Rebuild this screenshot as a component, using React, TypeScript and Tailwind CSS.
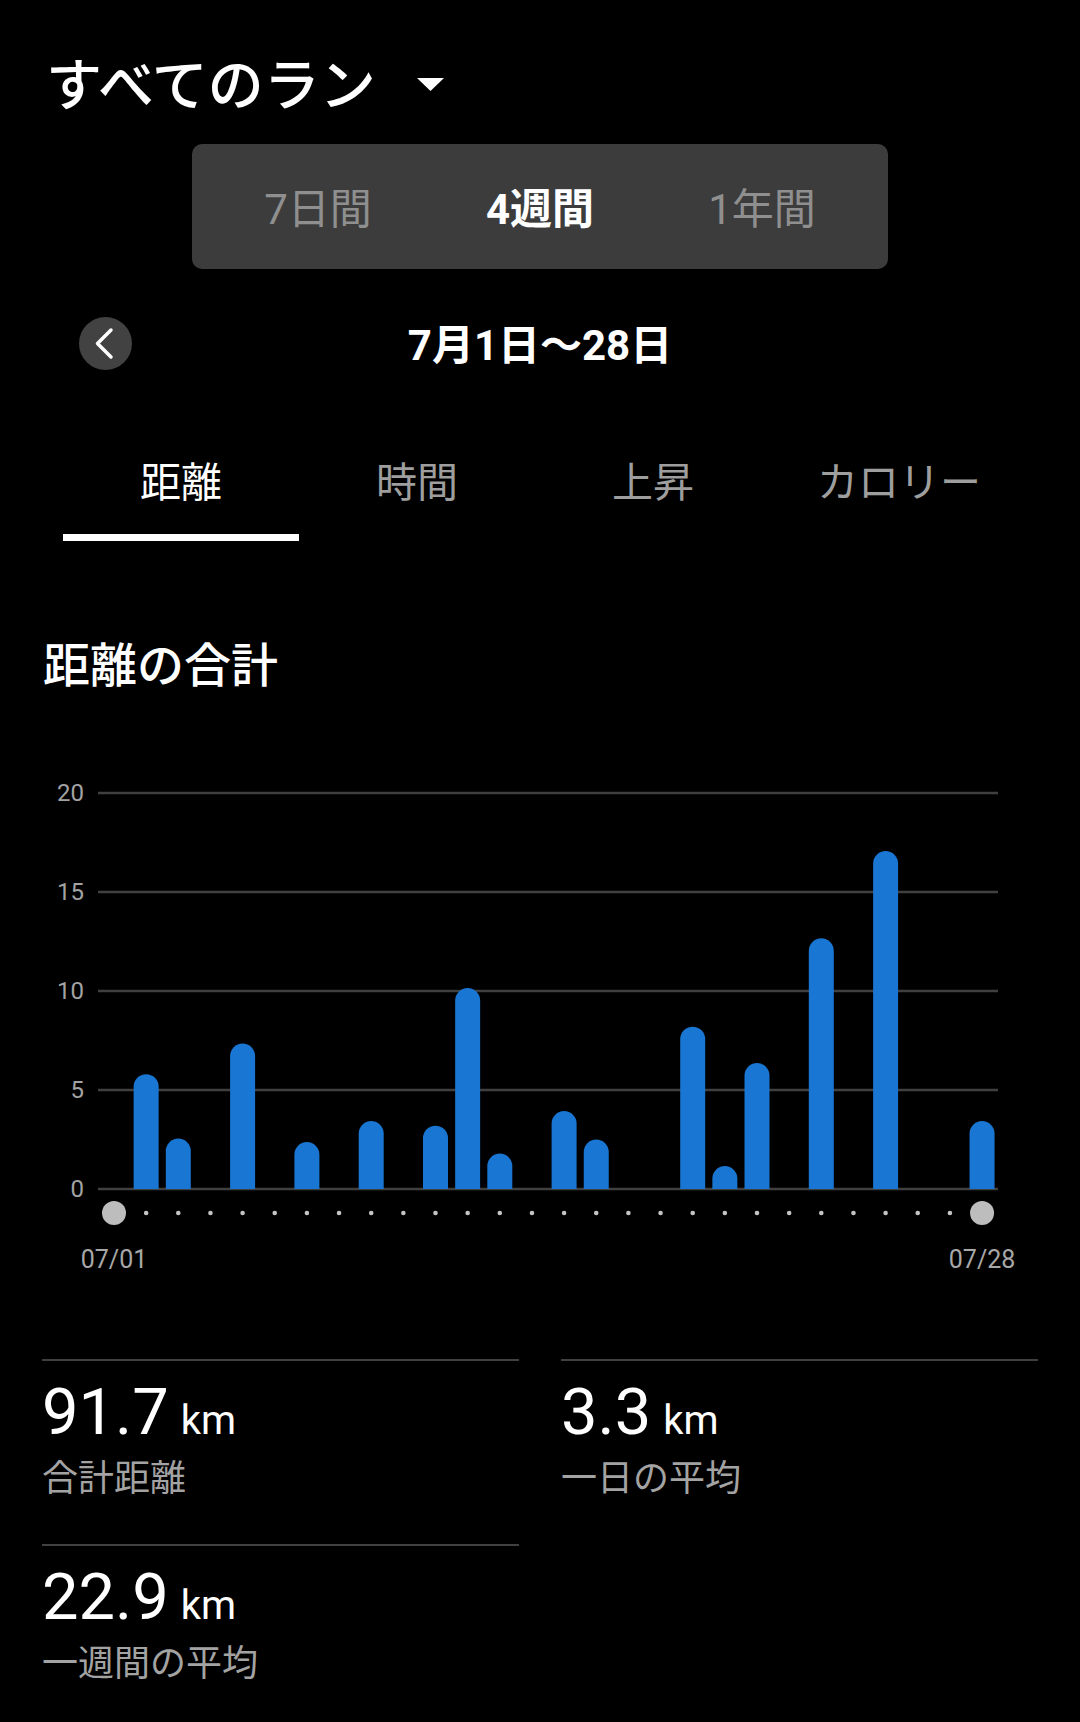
import React from 'react'

const FONT = "font-['Roboto','Noto_Sans_CJK_JP',sans-serif]"

// [day, km]
const runs: [number, number][] = [
  [2, 5.8], [3, 2.55], [5, 7.35], [7, 2.37], [9, 3.43], [11, 3.2], [12, 10.15], [13, 1.79],
  [15, 3.94], [16, 2.5], [19, 8.2], [20, 1.16], [21, 6.36], [23, 12.66], [25, 17.07], [28, 3.43],
]

const ZERO = 419
const UNIT = 19.8
const dayX = (d: number) => 114 + (d - 1) * 32.15

function Chart() {
  return (
    <svg width="1080" height="520" viewBox="0 0 1080 520" className="block mt-[81px]">
      {[0, 5, 10, 15, 20].map(v => (
        <g key={v}>
          <line x1="98" x2="998" y1={ZERO - v * UNIT} y2={ZERO - v * UNIT} stroke="#404040" strokeWidth="2.5" />
          <text x="84" y={ZERO - v * UNIT} textAnchor="end" dominantBaseline="central" fontSize="24" fill="#a3a3a3">
            {v}
          </text>
        </g>
      ))}
      {runs.map(([d, v]) => {
        const cx = dayX(d)
        const top = ZERO - v * UNIT
        const r = 12.5
        return (
          <path
            key={d}
            d={`M${cx - r} ${ZERO} V${top + r} A${r} ${r} 0 0 1 ${cx + r} ${top + r} V${ZERO} Z`}
            fill="#1976d2"
          />
        )
      })}
      {Array.from({ length: 28 }, (_, i) => i + 1).map(d =>
        d === 1 || d === 28 ? (
          <circle key={d} cx={dayX(d)} cy="443" r="12" fill="#bdbdbd" />
        ) : (
          <circle key={d} cx={dayX(d)} cy="443" r="2.3" fill="#c4c4c4" />
        )
      )}
      <text x={dayX(1)} y="489" textAnchor="middle" dominantBaseline="central" fontSize="25" fill="#a8a8a8">07/01</text>
      <text x={dayX(28)} y="489" textAnchor="middle" dominantBaseline="central" fontSize="25" fill="#a8a8a8">07/28</text>
    </svg>
  )
}

function Stat({ value, label }: { value: string; label: string }) {
  return (
    <div className="flex flex-col">
      <div className="h-[2px] bg-[#404040]" />
      <div className="mt-[19px] text-[65px] leading-none text-white">
        {value}
        <span className="ml-[12px] text-[40px]">km</span>
      </div>
      <p className="mt-[16px] text-[36px] leading-[36px] text-[#a3a3a3]">{label}</p>
    </div>
  )
}

export default function App() {
  const tabs = ['距離', '時間', '上昇', 'カロリー']
  const ranges = ['7日間', '4週間', '1年間']

  return (
    <main className={`w-[1080px] h-[1722px] bg-black text-white overflow-hidden ${FONT}`}>
      {/* Header */}
      <div className="flex items-center pt-[58px] pl-[46px]">
        <h1 className="text-[56px] leading-[56px] font-medium text-white">すべてのラン</h1>
        <svg width="27" height="13" viewBox="0 0 27 13" className="ml-[41px] -mt-[4px]">
          <polygon points="0,0 27,0 13.5,13" fill="#ffffff" />
        </svg>
      </div>

      {/* Range selector */}
      <div className="mx-auto mt-[30px] w-[696px] h-[125px] rounded-[10px] bg-[#3c3c3c] px-[15px] pt-[6px] grid grid-cols-3 items-center">
        {ranges.map(r => (
          <span
            key={r}
            className={`text-center text-[42px] leading-[42px] ${r === '4週間' ? 'text-white font-bold' : 'text-[#8f8f8f]'}`}
          >
            {r}
          </span>
        ))}
      </div>

      {/* Date row */}
      <div className="mt-[48px] h-[53px] grid grid-cols-[1fr_auto_1fr] items-center">
        <div className="pl-[79px]">
          <button className="w-[53px] h-[53px] rounded-full bg-[#424242] flex items-center justify-center">
            <svg width="53" height="53" viewBox="0 0 53 53">
              <path d="M32 13 L18.5 26.5 L32 40" fill="none" stroke="#ffffff" strokeWidth="3.5" strokeLinecap="round" strokeLinejoin="round" />
            </svg>
          </button>
        </div>
        <p className="pt-[4px] text-[42px] leading-[42px] font-bold">7月1日〜28日</p>
        <div />
      </div>

      {/* Tabs */}
      <div className="mt-[92px] ml-[63px] grid grid-cols-[236px_236px_236px_256px]">
        {tabs.map((t, i) => (
          <div key={t} className="flex flex-col items-center">
            <span className={`text-[41px] leading-[42px] ${i === 0 ? 'text-white' : 'text-[#9e9e9e]'}`}>{t}</span>
            <div className={`mt-[30px] h-[7px] w-full ${i === 0 ? 'bg-white' : 'bg-transparent'}`} />
          </div>
        ))}
      </div>

      {/* Section title */}
      <h2 className="mt-[101px] pl-[43px] text-[47px] leading-[47px] font-medium">距離の合計</h2>

      <Chart />

      {/* Stats */}
      <div className="mt-[69px] px-[42px] grid grid-cols-2 gap-x-[42px] gap-y-[47px]">
        <Stat value="91.7" label="合計距離" />
        <Stat value="3.3" label="一日の平均" />
        <Stat value="22.9" label="一週間の平均" />
      </div>
    </main>
  )
}
